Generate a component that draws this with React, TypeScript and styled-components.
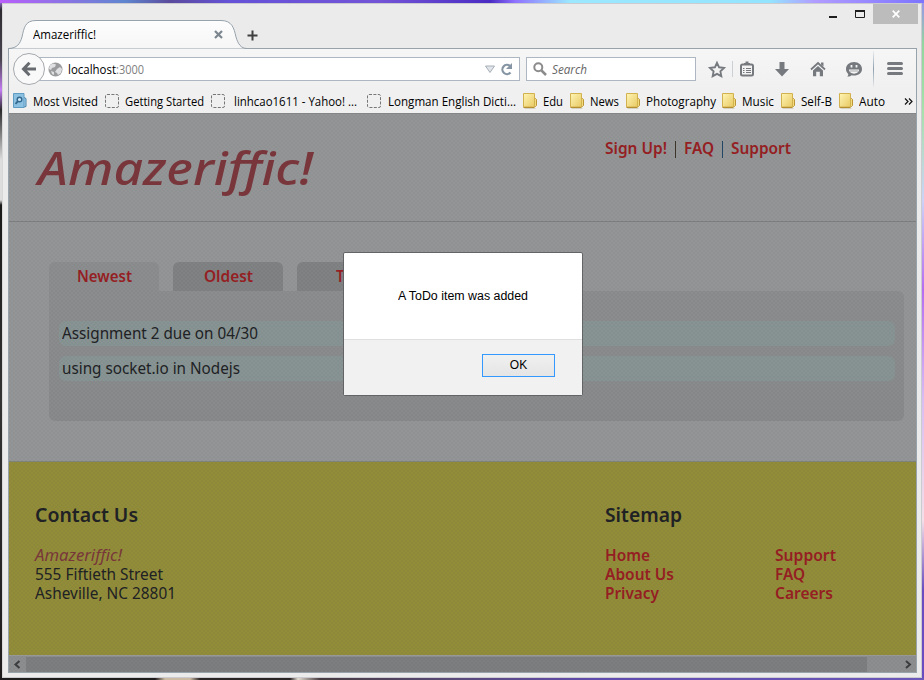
import React, { useLayoutEffect, useRef, useState } from "react";
import styled, { createGlobalStyle, css } from "styled-components";

const Global = createGlobalStyle`
  * { box-sizing: border-box; }
  body { margin: 0; overflow: hidden; font-variant-ligatures: none; }
`;

const UI = `"Open Sans", "Noto Sans", sans-serif`;
const PAGE = `"Noto Sans", "Open Sans", sans-serif`;
const RED = "#971e22";

/* ---------- text that fills a known width ---------- */
const Slot = styled.span<{ $w: number }>`
  display: block;
  flex: none;
  width: ${(p) => p.$w}px;
  white-space: nowrap;
`;
const Stretch = styled.span`
  display: inline-block;
  transform-origin: 0 50%;
`;
function Fit({ w, children }: { w: number; children: React.ReactNode }) {
  const ref = useRef<HTMLSpanElement>(null);
  const [scale, setScale] = useState(1);
  useLayoutEffect(() => {
    const el = ref.current;
    if (!el) return;
    const natural = parseFloat(getComputedStyle(el).width);
    if (natural) setScale(w / natural);
  }, [w]);
  return (
    <Slot $w={w}>
      <Stretch ref={ref} style={{ transform: `scaleX(${scale})` }}>
        {children}
      </Stretch>
    </Slot>
  );
}

/* ---------- desktop and window ---------- */
const Desktop = styled.div`
  width: 924px;
  height: 680px;
  padding: 3px 2px 2px;
  font-family: ${UI};
  background:
    linear-gradient(90deg, #b95ffb 0, #5f86cf 125px, #5b4b9d 170px, #6552d8 230px, #7354d6 380px, #4a2cc4 490px, #8f72ff 515px, #9be8ff 570px, #93e4ff 770px, #b19cff 815px, #7c74ff 924px) 0 0 / 100% 3px no-repeat,
    linear-gradient(90deg, #1f1c1d 0, #1f1c1d 155px, #cdbca4 165px, #cdbca4 190px, #292425 200px, #292425 290px, #e2dcd0 298px, #463b40 320px, #5a4a7c 460px, #5f4bae 600px, #6c58b8 924px) 0 100% / 100% 2px no-repeat,
    linear-gradient(#9a91f0 0, #93d69d 45px, #a6e0aa 110px, #ccd3f7 200px, #b56df0 290px, #d8bdf2 400px, #f4dfe8 520px, #6a4cc0 590px) 100% 0 / 2px 100% no-repeat,
    linear-gradient(#a97bf4 0, #2d2b30 10px, #4a4550 60px, #c47cf5 90px, #2a2a2c 110px, #ddd 160px, #ddd 200px, #191919 205px, #333 400px, #1f1b1c 680px);
`;
const Window = styled.div`
  display: flex;
  flex-direction: column;
  height: 675px;
  padding: 0 6px 4px 6px;
  background: #ebebeb;
  border: solid #cbcbd0;
  border-width: 1px 1px 1px 0;
  box-shadow: inset 1px 0 #d8d8d8;
`;
const TitleBar = styled.div`
  position: relative;
  display: flex;
  align-items: flex-start;
  height: 44px;
  flex: none;
  margin-right: -3px;
`;
const TabShape = styled.svg`
  position: absolute;
  left: 0;
  top: 15px;
  z-index: 1;
`;
const TabLabel = styled.div`
  position: relative;
  z-index: 2;
  display: flex;
  align-items: center;
  justify-content: space-between;
  width: 216px;
  height: 30px;
  margin: 15px 0 0 25px;
  padding-right: 26px;
  font-size: 12px;
  color: #000;
`;
const NewTab = styled.svg`
  margin: 26px 0 0 -2px;
  position: relative;
  z-index: 2;
`;
const Controls = styled.div`
  display: flex;
  margin-left: auto;
  height: 20px;
`;
const Close = styled.div`
  display: grid;
  place-items: center;
  width: 45px;
  height: 20px;
  background: #bcbcbc;
`;
const Client = styled.div`
  display: flex;
  flex-direction: column;
  flex: 1;
  width: 909px;
  border: 1px solid #97a2ab;
`;

/* ---------- toolbars ---------- */
const NavBar = styled.div`
  display: flex;
  align-items: center;
  height: 40px;
  flex: none;
  padding-left: 4px;
  background: linear-gradient(#f6f6f7, #f0f0f0);
`;
const Back = styled.div`
  display: grid;
  place-items: center;
  width: 32px;
  height: 32px;
  border: 1px solid #a5a9ac;
  border-radius: 50%;
  background: #f9f9f9;
  z-index: 1;
  flex: none;
`;
const Field = styled.div<{ $w: number; $first?: boolean }>`
  display: flex;
  align-items: center;
  width: ${(p) => p.$w}px;
  height: 24px;
  flex: none;
  background: #fff;
  border: 1px solid #aeb6c1;
  font-size: 12px;
  ${(p) =>
    p.$first
      ? css`margin-left: -10px; padding: 0 4px 0 12px;`
      : css`margin-left: 6px; padding-left: 6px; color: #666; font-style: italic;`}
`;
const Host = styled.div`
  display: flex;
  margin-left: 5px;
  flex: 1;
`;
const Port = styled.div`color: #808080;`;
const Hint = styled.div`margin-left: 5px;`;
const Tools = styled.svg`flex: none;`;
const Bookmarks = styled.div`
  display: flex;
  align-items: center;
  height: 24px;
  flex: none;
  font-size: 12px;
  color: #000;
  background: #f0f0f0;
  padding-left: 3px;
`;
const Bookmark = styled.div<{ $gap: number; $space: number }>`
  display: flex;
  align-items: center;
  gap: ${(p) => p.$space}px;
  margin-right: ${(p) => p.$gap}px;
`;

/* ---------- web page ---------- */
const Viewport = styled.div`
  position: relative;
  display: flex;
  flex-direction: column;
  flex: 1;
  background: #949596;
  font-family: ${PAGE};
  font-size: 16px;
  color: #202124;
  border-top: 1px solid #858687;
`;
const Header = styled.header`
  display: flex;
  height: 108px;
  flex: none;
  padding-left: 29px;
  border-bottom: 1px solid #7d7f81;
`;
const Title = styled.h1`
  width: 567px;
  margin: 18px 0 0;
  font: italic 500 46px/70px ${PAGE};
  color: #7a363b;
`;
const Links = styled.nav`
  display: flex;
  gap: 6px;
  padding-top: 23px;
  font-weight: 600;
  line-height: 22px;
  color: ${RED};
`;
const Bar = styled.i<{ $blue?: boolean }>`
  width: 1px;
  height: 17px;
  margin: 4px 2px 0;
  background: ${(p) => (p.$blue ? "#214666" : "#3d3527")};
`;
const Main = styled.main`
  height: 239px;
  flex: none;
  padding: 40px 12px 0 40px;
`;
const Tabs = styled.div`
  display: flex;
  gap: 14px;
  height: 29px;
`;
const Tab = styled.div<{ $active?: boolean }>`
  display: flex;
  justify-content: center;
  width: 110px;
  padding-top: 3px;
  border-radius: 6px 6px 0 0;
  background: ${(p) => (p.$active ? "#8c8d8e" : "#818283")};
  color: ${RED};
  font-weight: 600;
  line-height: 22px;
`;
const Panel = styled.div`
  display: flex;
  flex-direction: column;
  gap: 10px;
  height: 130px;
  padding: 30px 9px 0 10px;
  border-radius: 0 6px 6px 6px;
  background: linear-gradient(#8c8d8e, #898a8b);
`;
const Item = styled.div`
  height: 25px;
  padding-left: 3px;
  border-radius: 7px;
  background: #889493;
  line-height: 25px;
`;
const Footer = styled.footer`
  display: flex;
  flex: 1;
  padding: 37px 0 0 26px;
  background: #928d39;
  border-top: 1px solid #81857a;
`;
const Column = styled.section<{ $w: number }>`
  width: ${(p) => p.$w}px;
  line-height: 19px;
`;
const Heading = styled.h2`
  margin: 0 0 15px;
  font: 600 20px/32px ${PAGE};
`;
const Brand = styled.div`
  color: #7a373a;
  font-style: italic;
`;
const LinkGrid = styled.div`
  display: grid;
  grid-template-columns: 170px 100px;
  color: ${RED};
  font-weight: 600;
`;
const ScrollBar = styled.div`
  display: flex;
  align-items: center;
  height: 17px;
  flex: none;
  background: #8d8e8f;
  border-top: 1px solid #999a9a;
`;
const Thumb = styled.div`
  width: 841px;
  height: 15px;
  background: #7d7e7f;
`;
const Arrow = styled.svg<{ $right?: boolean }>`
  margin-left: ${(p) => (p.$right ? 32 : 0)}px;
`;
const Veil = styled.div`
  position: absolute;
  inset: 0;
  background:
    linear-gradient(45deg, rgba(35,40,60,.042) 25%, transparent 25% 75%, rgba(35,40,60,.042) 75%) 0 0 / 4px 4px,
    linear-gradient(45deg, rgba(35,40,60,.042) 25%, transparent 25% 75%, rgba(35,40,60,.042) 75%) 2px 2px / 4px 4px;
`;
const Dialog = styled.div`
  position: absolute;
  left: 334px;
  top: 138px;
  width: 240px;
  height: 144px;
  display: flex;
  flex-direction: column;
  border: 1px solid #636465;
  border-radius: 2px;
  background: #fff;
  color: #000;
  font: 12px/16px "Liberation Sans", sans-serif;
`;
const Message = styled.div`
  height: 86px;
  padding: 35px 0 0 54px;
`;
const Actions = styled.div`
  flex: 1;
  padding: 14px 27px 0 0;
  background: #f1f1f1;
  border-top: 1px solid #dfdfdf;
`;
const Ok = styled.button`
  display: grid;
  place-items: center;
  width: 73px;
  height: 23px;
  margin-left: auto;
  padding: 0 0 1px;
  border: 1px solid #3399ff;
  background: linear-gradient(#f0f0f0, #e5e5e5);
  font: inherit;
  color: #000;
`;

const Folder = () => (
  <svg width="15" height="16" viewBox="0 0 15 16">
    <defs>
      <linearGradient id="fold" x1="0" y1="0" x2="1" y2="1">
        <stop offset="0" stopColor="#fff5b5" />
        <stop offset="1" stopColor="#e8c963" />
      </linearGradient>
    </defs>
    <path d="M1.500 15.500h11" stroke="#d5d2c4" />
    <path d="M11 5.500h1.500l1 1v6l-1 1H11" fill="#f3da7a" stroke="#bb9637" />
    <path d="M.5 .5h11v13.500H.5z" fill="url(#fold)" stroke="#d2b24f" />
    <path d="M.5 14.500h11" stroke="#b58f32" />
  </svg>
);
const Blank = () => (
  <svg width="14" height="14" viewBox="0 0 14 14">
    <rect x=".5" y=".5" width="13" height="13" rx="1.500" fill="none" stroke="#777" strokeDasharray="3 1.400" />
  </svg>
);
const Visited = () => (
  <svg width="15" height="16" viewBox="-1 0 15 16">
    <path d="M11 4.500l2 1v8l-2 .5" fill="#a7d3ee" stroke="#4681a8" />
    <path d="M.5 .5h10.500v14H.5z" fill="#8dc1e2" stroke="#5f9cc4" />
    <circle cx="6.500" cy="6.500" r="2.300" fill="#cde8f7" stroke="#33688e" strokeWidth="1.400" />
    <path d="M4.800 8.300L2.500 10.800" stroke="#33688e" strokeWidth="1.800" />
  </svg>
);

type Mark = { label: string; w: number; icon: () => React.ReactElement; gap: number; space: number };
const MARKS: Mark[] = [
  { label: "Most Visited", w: 65, icon: Visited, gap: 7, space: 6 },
  { label: "Getting Started", w: 79, icon: Blank, gap: 7, space: 6 },
  { label: "linhcao1611 - Yahoo! ...", w: 123, icon: Blank, gap: 10, space: 9 },
  { label: "Longman English Dicti...", w: 128, icon: Blank, gap: 7, space: 7 },
  { label: "Edu", w: 20, icon: Folder, gap: 7, space: 5 },
  { label: "News", w: 29, icon: Folder, gap: 7, space: 5 },
  { label: "Photography", w: 70, icon: Folder, gap: 6, space: 5 },
  { label: "Music", w: 32, icon: Folder, gap: 7, space: 5 },
  { label: "Self-B", w: 31, icon: Folder, gap: 7, space: 5 },
  { label: "Auto", w: 26, icon: Folder, gap: 19, space: 5 },
];
const ITEMS = [
  { text: "Assignment 2 due on 04/30", w: 196 },
  { text: "using socket.io in Nodejs", w: 178 },
];
const SITEMAP: [string, number][] = [
  ["Home", 45], ["Support", 61], ["About Us", 69], ["FAQ", 30], ["Privacy", 54], ["Careers", 58],
];

export default function App() {
  return (
    <Desktop>
      <Global />
      <Window>
        <TitleBar>
          <TabShape width="909" height="30" viewBox="0 0 909 30">
            <defs>
              <linearGradient id="tab" x1="0" y1="0" x2="0" y2="1">
                <stop offset="0" stopColor="#fdfdfd" />
                <stop offset="1" stopColor="#f6f6f7" />
              </linearGradient>
            </defs>
            <path
              d="M1 29.500C9 29 12 25 14 18C16 9 17 1.500 28 1.500H213C224 1.500 226 9 228 18C230 25 233 29.500 239 29.500"
              fill="url(#tab)"
              stroke="#97a2ab"
            />
          </TabShape>
          <TabLabel>
            <Fit w={63}>Amazeriffic!</Fit>
            <svg width="9" height="9" viewBox="0 0 9 9">
              <path d="M1 1l7 7M8 1L1 8" stroke="#7c868f" strokeWidth="2.200" />
            </svg>
          </TabLabel>
          <NewTab width="11" height="11" viewBox="0 0 11 11">
            <path d="M5.500 .5v10M.5 5.500h10" stroke="#3f3f3f" strokeWidth="2" />
          </NewTab>
          <Controls>
            <svg width="45" height="20" viewBox="0 0 45 20">
              <path d="M1 13h8" stroke="#1e1e1e" strokeWidth="2" />
              <path d="M27.500 6.500h9v7h-9z" fill="none" stroke="#1e1e1e" />
              <path d="M27 7h10" stroke="#1e1e1e" strokeWidth="2" />
            </svg>
            <Close>
              <svg width="8" height="8" viewBox="0 0 8 8">
                <path d="M.7 .7l6.600 6.600M7.300 .7L.7 7.300" stroke="#fff" strokeWidth="1.700" />
              </svg>
            </Close>
          </Controls>
        </TitleBar>
        <Client>
          <NavBar>
            <Back>
              <svg width="16" height="16" viewBox="0 0 16 16">
                <path d="M8.500 1.800L2.500 8l6 6.200M3 8h12" fill="none" stroke="#686c70" strokeWidth="3" />
              </svg>
            </Back>
            <Field $w={485} $first>
              <svg width="15" height="15" viewBox="0 0 15 15">
                <circle cx="7.500" cy="7.500" r="7" fill="#999b9d" />
                <path d="M2 3l3-1.500 3 1-1 2.500-3 1-1 2-2-1zM9 7l3-2 2 2-1 4-3 2-1-2-2-1zM3 9l3 1v3l-2-1z" fill="#dfe0e1" />
              </svg>
              <Host>
                <Fit w={48}>localhost</Fit>
                <Port><Fit w={28}>:3000</Fit></Port>
              </Host>
              <svg width="32" height="16" viewBox="0 0 32 16">
                <path d="M2.500 5h9L7 11.500z" fill="#e1e5e9" stroke="#a5afb9" />
                <path d="M27.500 11.500A4.600 4.600 0 1 1 27 5" fill="none" stroke="#8595a4" strokeWidth="2.200" />
                <path d="M29 2v6h-6z" fill="#8595a4" />
              </svg>
            </Field>
            <Field $w={170}>
              <svg width="14" height="14" viewBox="0 0 14 14">
                <circle cx="5.300" cy="5.300" r="4" fill="none" stroke="#8b8b8b" strokeWidth="2" />
                <path d="M8.500 8.500L13 13" stroke="#8b8b8b" strokeWidth="2.500" />
              </svg>
              <Hint><Fit w={35}>Search</Fit></Hint>
            </Field>
            <Tools width="219" height="40" viewBox="696 49 219 40">
              <defs>
                <linearGradient id="sep" x1="0" y1="0" x2="0" y2="1">
                  <stop offset="0" stopColor="#8fa0af" stopOpacity="0.100" />
                  <stop offset=".5" stopColor="#8fa0af" />
                  <stop offset="1" stopColor="#8fa0af" stopOpacity="0.100" />
                </linearGradient>
              </defs>
              <path d="M717 62.800l2.100 4.500 4.900.6-3.600 3.400.9 4.900-4.300-2.400-4.300 2.400.9-4.900-3.600-3.400 4.900-.6z" fill="none" stroke="#767a7e" strokeWidth="1.900" />
              <path d="M732.500 61v16" stroke="#cbd0d5" />
              <rect x="741" y="64.500" width="12" height="11" rx="1.500" fill="none" stroke="#767a7e" strokeWidth="2" />
              <path d="M744 65v-2h1.500v-1.500h3V63h1.500v2z" fill="#767a7e" />
              <path d="M743 68.500h1.500M746 68.500h5M743 70.500h1.500M746 70.500h5M743 72.500h1.500M746 72.500h5" stroke="#767a7e" />
              <path d="M779.500 62h5v7h4.500L782 76.500 775 69h4.500z" fill="#767a7e" />
              <path d="M811 69.500l7-6.500 7 6.500" fill="none" stroke="#767a7e" strokeWidth="1.800" />
              <path d="M813 70.500l5-4.500 5 4.500v5.800h-3.200v-4.500h-3.600v4.500H813zM821 62.500h2.500v4l-2.500-2z" fill="#767a7e" />
              <path d="M854 62c4.600 0 8 3 8 7s-3.400 6.500-8 6.500c-1 0-1.500 0-2.300-.2-1 1-3 1.500-4.500 1.200.8-.7 1.200-1.700 1-2.600-1.400-1.300-2.200-3-2.200-4.900 0-4 3.400-7 8-7z" fill="#767a7e" />
              <path d="M849 69.500h10c0 5.500-10 5.500-10 0z" fill="#f4f4f4" />
              <path d="M850 71h8" stroke="#767a7e" strokeWidth=".6" />
              <path d="M851.500 65v2.500M856.500 65v2.500" stroke="#f4f4f4" strokeWidth="1.800" />
              <rect x="873" y="51" width="1" height="36" fill="url(#sep)" />
              <path d="M888.500 63.500h13M888.500 68.500h13M888.500 73.500h13" stroke="#767a7e" strokeWidth="3" strokeLinecap="round" />
            </Tools>
          </NavBar>
          <Bookmarks>
            {MARKS.map(({ label, w, icon: Icon, gap, space }) => (
              <Bookmark key={label} $gap={gap} $space={space}>
                <Icon />
                <Fit w={w}>{label}</Fit>
              </Bookmark>
            ))}
            <svg width="9" height="7" viewBox="0 0 9 7">
              <path d="M1 .5l3 3-3 3M5 .5l3 3-3 3" fill="none" stroke="#111" strokeWidth="1.200" />
            </svg>
          </Bookmarks>
          <Viewport>
            <Header>
              <Title><Fit w={275}>Amazeriffic!</Fit></Title>
              <Links>
                <Fit w={62}>Sign Up!</Fit>
                <Bar />
                <Fit w={30}>FAQ</Fit>
                <Bar $blue />
                <Fit w={60}>Support</Fit>
              </Links>
            </Header>
            <Main>
              <Tabs>
                <Tab $active><Fit w={55}>Newest</Fit></Tab>
                <Tab><Fit w={49}>Oldest</Fit></Tab>
                <Tab><Fit w={32}>Tags</Fit></Tab>
              </Tabs>
              <Panel>
                {ITEMS.map((i) => (
                  <Item key={i.text}><Fit w={i.w}>{i.text}</Fit></Item>
                ))}
              </Panel>
            </Main>
            <Footer>
              <Column $w={570}>
                <Heading><Fit w={103}>Contact Us</Fit></Heading>
                <Brand><Fit w={87}>Amazeriffic!</Fit></Brand>
                <Fit w={128}>555 Fiftieth Street</Fit>
                <Fit w={141}>Asheville, NC 28801</Fit>
              </Column>
              <Column $w={270}>
                <Heading><Fit w={77}>Sitemap</Fit></Heading>
                <LinkGrid>
                  {SITEMAP.map(([t, w]) => (
                    <Fit key={t} w={w}>{t}</Fit>
                  ))}
                </LinkGrid>
              </Column>
            </Footer>
            <ScrollBar>
              <Arrow width="17" height="9" viewBox="0 0 17 9">
                <path d="M10.500 1L6.500 4.500l4 3.500" fill="none" stroke="#3c3d3e" strokeWidth="2" />
              </Arrow>
              <Thumb />
              <Arrow $right width="17" height="9" viewBox="0 0 17 9">
                <path d="M7 1l4 3.500L7 8" fill="none" stroke="#3c3d3e" strokeWidth="2" />
              </Arrow>
            </ScrollBar>
            <Veil />
            <Dialog>
              <Message><Fit w={130}>A ToDo item was added</Fit></Message>
              <Actions><Ok>OK</Ok></Actions>
            </Dialog>
          </Viewport>
        </Client>
      </Window>
    </Desktop>
  );
}
